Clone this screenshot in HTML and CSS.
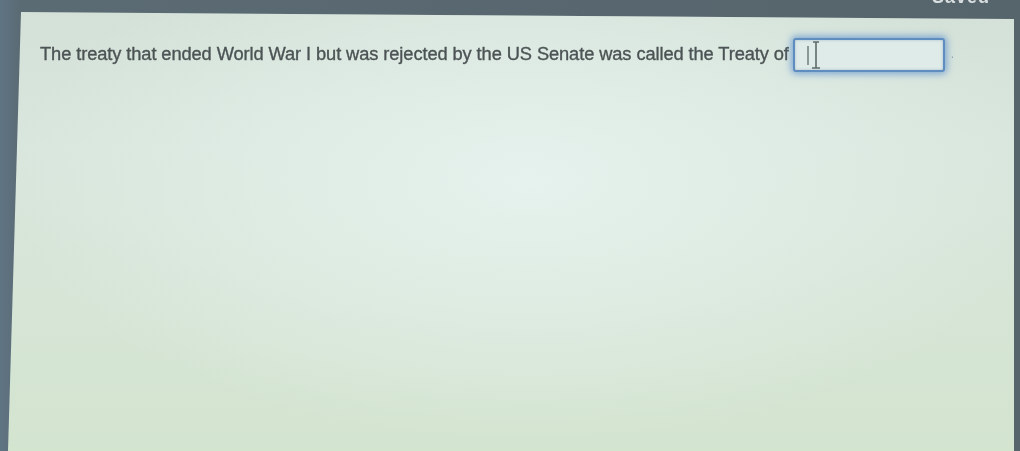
FILE: index.html
```html
<!DOCTYPE html>
<html>
<head>
<meta charset="utf-8">
<link rel="stylesheet" href="styles.css">
</head>
<body>
<div class="screen">
  <div class="topbar"><span class="saved">Saved</span></div>
  <div class="panel">
    <div class="question">
      <span class="qtext">The treaty that ended World War I but was rejected by the US Senate was called the Treaty of</span>
      <span class="answer">
        <span class="caret"></span>
        <svg class="ibeam" width="12" height="28" viewBox="0 0 12 28">
          <path d="M3 1 H9 M6 1 V27 M2 27 H10" stroke="#5d6b69" stroke-width="1.6" fill="none"/>
        </svg>
      </span>
      <span class="dot">.</span>
    </div>
  </div>
</div>
</body>
</html>
```
FILE: styles.css
```css
html, body {
  margin: 0;
  padding: 0;
  width: 1020px;
  height: 451px;
  overflow: hidden;
  background: #56646b;
}
.screen {
  position: relative;
  width: 1020px;
  height: 451px;
  background: linear-gradient(90deg, #5f7484 0px, #5b6b74 20px, #56646b 100%);
  display: flex;
  flex-direction: column;
}
.topbar {
  height: 12px;
  display: flex;
  justify-content: flex-end;
  padding-right: 30px;
  overflow: hidden;
}
.saved {
  font-family: "Liberation Sans", Arial, sans-serif;
  font-weight: bold;
  font-size: 18px;
  color: #d9dfe0;
  margin-top: -13px;
  letter-spacing: 1px;
  filter: blur(0.6px);
}
.panel {
  flex: 1;
  margin-left: 8px;
  margin-right: 6px;
  clip-path: polygon(13px 0, 100% 7px, 100% 100%, 0 100%);
  background:
    radial-gradient(ellipse 520px 260px at 520px 170px, #e5f2ed 0%, rgba(229,242,237,0) 100%),
    linear-gradient(180deg, #d4e1d8 0%, #d9e6dd 30%, #d3e4cf 100%);
  padding: 24px 0 0 32px;
}
.question {
  display: flex;
  align-items: center;
  font-family: "Liberation Sans", Arial, sans-serif;
  font-size: 18.3px;
  color: #4c5354;
  filter: blur(0.5px);
}
.qtext {
  letter-spacing: -0.1px;
  -webkit-text-stroke: 0.35px #4c5354;
}
.answer {
  width: 136px;
  height: 30px;
  margin-left: 4px;
  margin-top: 2px;
  border: 2px solid #5f8dc0;
  border-radius: 3px;
  background: #dfebe8;
  box-shadow: 0 0 7px 2px rgba(88,140,205,0.7), inset 0 0 3px rgba(80,120,170,0.4);
  display: flex;
  align-items: center;
  padding-left: 12px;
  gap: 1px;
}
.caret {
  width: 2px;
  height: 19px;
  background: #8a9896;
}
.ibeam {
  display: block;
  margin-top: 0;
}
.dot {
  margin-left: 6px;
  color: #8fa3ad;
  font-size: 12px;
}
```
